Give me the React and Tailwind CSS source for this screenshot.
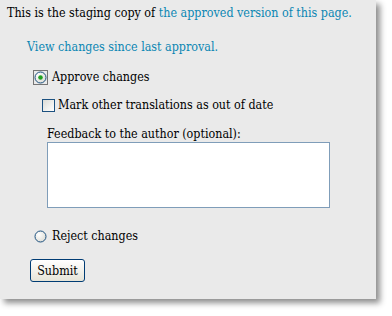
import React from "react";

function Radio({ checked }) {
  return (
    <svg width="15" height="15" viewBox="0 0 15 15" className="block shrink-0">
      <defs>
        <radialGradient id={checked ? "rg1" : "rg2"} cx="0.35" cy="0.35" r="0.8">
          <stop offset="0" stopColor="#ffffff" />
          <stop offset="1" stopColor="#d8d8d0" />
        </radialGradient>
      </defs>
      {checked && (
        <rect x="0.5" y="0.5" width="14" height="14" fill="none" stroke="#000" strokeWidth="1" strokeDasharray="1 1" />
      )}
      <circle cx="7.5" cy="7.5" r="5.5" fill={`url(#${checked ? "rg1" : "rg2"})`} stroke="#1c5180" strokeWidth="1" />
      {checked && <circle cx="7.5" cy="7.5" r="2.3" fill="#21a121" />}
    </svg>
  );
}

export default function App() {
  const font = { fontFamily: '"DejaVu Serif Condensed", "DejaVu Serif", serif', fontStretch: "condensed" };
  return (
    <div className="w-[392px] h-[316px] bg-white" style={font}>
      <div className="w-[376px] h-[299px] bg-[#eaeaea] shadow-[4px_4px_6px_rgba(0,0,0,0.45)] pl-[7px] pt-[5px] text-[12.4px] leading-[16px] text-black whitespace-nowrap">
        <p>
          This is the staging copy of{" "}
          <a className="text-[#0b86b3]">the approved version of this page.</a>
        </p>
        <p className="mt-[18px] ml-[20px] text-[#0b86b3]">View changes since last approval.</p>
        <div className="mt-[14px] ml-[26px] flex items-center gap-[4px]">
          <Radio checked />
          <span>Approve changes</span>
        </div>
        <div className="mt-[12px] ml-[35px] flex items-center gap-[3px]">
          <span className="block w-[13px] h-[13px] border border-[#1c5180] bg-gradient-to-br from-[#dcdcd6] to-white" />
          <span>Mark other translations as out of date</span>
        </div>
        <div className="ml-[40px] mt-[13px]">Feedback to the author (optional):</div>
        <div className="ml-[40px] w-[283px] h-[66px] border border-[#7f9db9] bg-white" />
        <div className="mt-[20px] ml-[26px] flex items-center gap-[4px]">
          <Radio />
          <span>Reject changes</span>
        </div>
        <button className="mt-[15px] ml-[23px] w-[55px] h-[23px] rounded-[3px] border border-[#003c74] bg-gradient-to-b from-white to-[#e6e4d8] text-[12.4px] leading-[16px] text-black" style={font}>
          Submit
        </button>
      </div>
    </div>
  );
}
